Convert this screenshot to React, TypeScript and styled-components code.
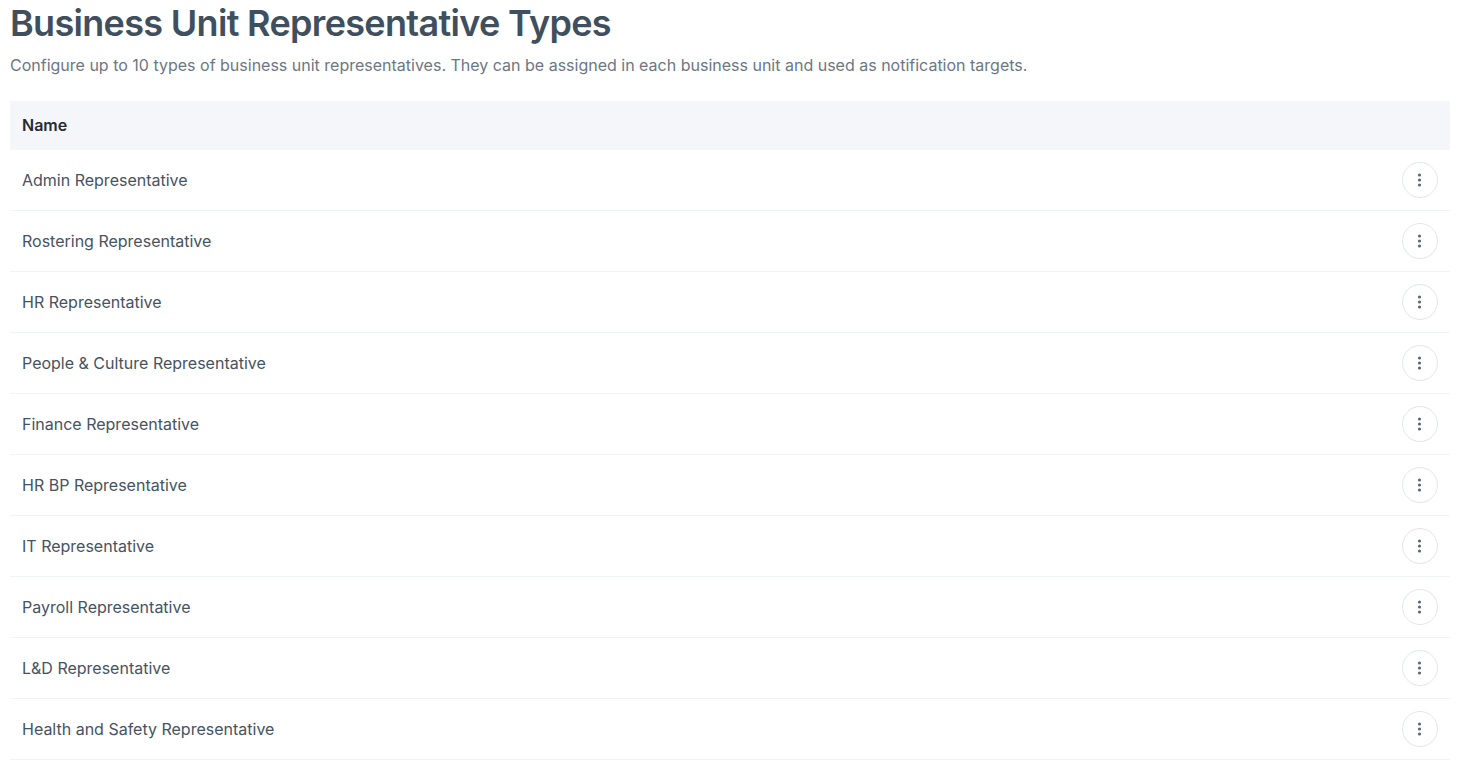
import styled, { createGlobalStyle } from "styled-components";

const GlobalStyle = createGlobalStyle`
  html, body {
    margin: 0;
    background: #fff;
    font-family: Inter, "Liberation Sans", sans-serif;
    overflow: hidden;
  }
`;

const Page = styled.main`
  height: 775px;
  padding: 0 15px 0 10px;
  overflow: hidden;
`;

const Title = styled.h1`
  margin: 0;
  padding-top: 1px;
  font-size: 36px;
  line-height: 44px;
  font-weight: 600;
  letter-spacing: -0.68px;
  color: #404f5e;
`;

const Subtitle = styled.p`
  margin: 8px 0 0;
  font-size: 16px;
  line-height: 24px;
  color: #6b7785;
`;

const Table = styled.div`
  margin-top: 24px;
`;

const HeaderRow = styled.div`
  display: flex;
  align-items: center;
  height: 49px;
  padding: 0 12px 2px;
  box-sizing: border-box;
  background: #f5f6fa;
  font-size: 16px;
  font-weight: 600;
  color: #252b33;
`;

const Row = styled.div`
  display: flex;
  align-items: center;
  justify-content: space-between;
  height: 60px;
  padding: 0 12px;
  border-bottom: 1px solid #f1f3f6;
  font-size: 16px;
  color: #465362;
`;

const MenuButton = styled.button`
  display: flex;
  align-items: center;
  justify-content: center;
  width: 36px;
  height: 36px;
  padding: 0;
  background: #fff;
  border: 1px solid #e3e6eb;
  border-radius: 50%;
  color: #5c6876;
`;

const names = [
  "Admin Representative",
  "Rostering Representative",
  "HR Representative",
  "People & Culture Representative",
  "Finance Representative",
  "HR BP Representative",
  "IT Representative",
  "Payroll Representative",
  "L&D Representative",
  "Health and Safety Representative",
];

const DotsIcon = () => (
  <svg width="16" height="16" viewBox="0 0 16 16" fill="currentColor" aria-hidden="true">
    <circle cx="7.5" cy="3" r="1.6" />
    <circle cx="7.5" cy="8" r="1.6" />
    <circle cx="7.5" cy="13" r="1.6" />
  </svg>
);

const App = () => {
  return (
    <Page>
      <GlobalStyle />
      <Title>Business Unit Representative Types</Title>
      <Subtitle>
        Configure up to 10 types of business unit representatives. They can be assigned in each
        business unit and used as notification targets.
      </Subtitle>
      <Table>
        <HeaderRow>Name</HeaderRow>
        {names.map((name) => (
          <Row key={name}>
            {name}
            <MenuButton type="button" aria-label={`Actions for ${name}`}>
              <DotsIcon />
            </MenuButton>
          </Row>
        ))}
      </Table>
    </Page>
  );
};

export default App;
